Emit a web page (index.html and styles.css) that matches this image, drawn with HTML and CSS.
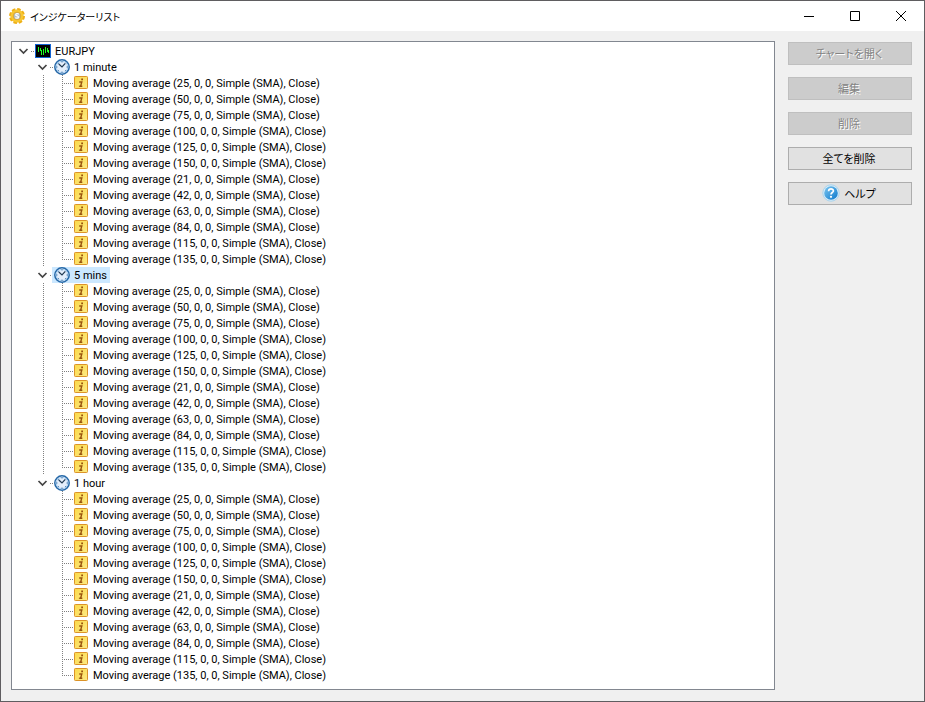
FILE: index.html
```html
<!DOCTYPE html>
<html lang="ja">
<head>
    <meta charset="UTF-8">
    <meta name="viewport" content="width=device-width, initial-scale=1.0">
    <title>インジケーターリスト</title>
    <link rel="stylesheet" href="styles.css">
    <script src="tree.js" defer></script>
</head>
<body>
    <!-- Shared icons -->
    <svg class="sprite" aria-hidden="true">
        <defs>
            <linearGradient id="gold" x1="0" y1="0" x2="1" y2="1">
                <stop offset="0" stop-color="#fbd94a"/>
                <stop offset="1" stop-color="#fdea84"/>
            </linearGradient>
            <linearGradient id="blue" x1="0" y1="0" x2="1" y2="1">
                <stop offset="0" stop-color="#7cc6f0"/>
                <stop offset="1" stop-color="#0a78cc"/>
            </linearGradient>
        </defs>
        <symbol id="chevron" viewBox="0 0 15 16">
            <path d="M3.5 6 L7.5 10 L11.5 6" fill="none" stroke="#444" stroke-width="1.7"/>
        </symbol>
        <symbol id="chart" viewBox="0 0 16 16">
            <rect x="0.5" y="1.5" width="15" height="13" fill="#000" stroke="#1464d2"/>
            <path d="M3.5 4v5M5.5 5v3M6.5 7v5M8.5 6v6M10.5 4v6M12.5 5v4M13.5 7v3" stroke="#1cff1c"/>
        </symbol>
        <symbol id="clock" viewBox="0 0 16 16">
            <circle cx="8" cy="8" r="7.2" fill="#e4eefb" stroke="#2568a8" stroke-width="1.5"/>
            <circle cx="8" cy="8" r="5.7" fill="none" stroke="#a9cdee"/>
            <path d="M8 2v1.5M8 12.5v1.5M2 8h1.5M12.5 8h1.5M4 4l.8.8M12 12l-.8-.8M4 12l.8-.8" stroke="#487fae"/>
            <path d="M4.8 5 L8 8 L11.3 4.3" fill="none" stroke="#223a52" stroke-width="1.2"/>
        </symbol>
        <symbol id="info" viewBox="0 0 16 16">
            <rect x="1.5" y="1.5" width="13" height="12" rx="0.8" fill="url(#gold)" stroke="#dc9328"/>
            <path d="M8.2 4.4h1.8" stroke="#98530e" stroke-width="1.7"/>
            <path d="M6.2 7h2.6L7.6 11.2h1.7" fill="none" stroke="#98530e" stroke-width="1.4"/>
            <path d="M5.9 11.2h2" stroke="#98530e" stroke-width="1.2"/>
        </symbol>
    </svg>

    <div class="window">
        <header class="title-bar">
            <svg class="app-icon" viewBox="0 0 16 16" aria-hidden="true">
                <circle cx="8" cy="8" r="6.6" fill="#f6bd20" stroke="#eeb018" stroke-width="2.8" stroke-dasharray="3.4 1.78"/>
                <circle cx="8" cy="8" r="6.2" fill="#f8c833"/>
                <circle cx="8" cy="8" r="3.8" fill="#b5bfc2" stroke="#e0a21c" stroke-width="0.8"/>
                <path d="M9.8 6.2C8.6 5.2 6.6 5.6 6.7 6.9 6.8 8.2 9.5 7.7 9.5 9.1 9.4 10.4 7.3 10.5 6.2 9.6" fill="none" stroke="#fff" stroke-width="1.2"/>
            </svg>
            <h1 class="title">インジケーターリスト</h1>
            <div class="window-controls">
                <button type="button" aria-label="最小化"><svg viewBox="0 0 12 12"><path d="M1 6.5h10"/></svg></button>
                <button type="button" aria-label="最大化"><svg viewBox="0 0 12 12"><path d="M1.5 1.5h9v9h-9z"/></svg></button>
                <button type="button" aria-label="閉じる"><svg viewBox="0 0 12 12"><path d="M1 1l10 10M11 1L1 11"/></svg></button>
            </div>
        </header>

        <main class="content">
            <div class="tree-panel">
                <ul class="tree">
                    <li>
                        <div class="row">
                            <button class="toggle" type="button" aria-label="EURJPY"><svg><use href="#chevron"/></svg></button>
                            <span class="label"><svg class="icon"><use href="#chart"/></svg>EURJPY</span>
                        </div>
                        <ul class="periods" id="periods"></ul>
                    </li>
                </ul>
            </div>

            <div class="actions">
                <button type="button" disabled>チャートを開く</button>
                <button type="button" disabled>編集</button>
                <button type="button" disabled>削除</button>
                <button type="button">全てを削除</button>
                <button type="button">
                    <svg class="help-icon" viewBox="0 0 18 18" aria-hidden="true">
                        <circle cx="9" cy="9" r="8.2" fill="#d8ecf8" stroke="#a9d3ed"/>
                        <circle cx="9" cy="9" r="6.8" fill="url(#blue)"/>
                        <path d="M6.6 7.2C6.7 4.2 11.5 4.3 11.4 7 11.3 8.5 9 8.6 9 10.4" fill="none" stroke="#fff" stroke-width="1.7"/>
                        <circle cx="9" cy="12.8" r="1.1" fill="#fff"/>
                    </svg>
                    ヘルプ
                </button>
            </div>
        </main>
    </div>
</body>
</html>
```

FILE: styles.css
```css
* {
    box-sizing: border-box;
}
body {
    margin: 0;
    font-family: Roboto, "Noto Sans CJK JP", sans-serif;
    font-size: 11px;
    color: #000;
}
.sprite {
    position: absolute;
    width: 0;
    height: 0;
}
.window {
    display: flex;
    flex-direction: column;
    min-height: 100vh;
    border: 1px solid #5f5d60;
    background: #f0f0f0;
}

/* Title bar */
.title-bar {
    display: flex;
    align-items: center;
    height: 30px;
    padding-left: 8px;
    background: #fff;
}
.app-icon {
    width: 16px;
    height: 16px;
    margin-right: 5px;
}
.title {
    flex: 1;
    margin: 0;
    font-family: "Noto Sans CJK JP", sans-serif;
    font-size: 10px;
    font-weight: normal;
    font-feature-settings: "palt";
}
.window-controls {
    display: flex;
}
.window-controls button {
    display: flex;
    align-items: center;
    justify-content: center;
    width: 46px;
    height: 30px;
    padding: 0;
    border: none;
    background: none;
}
.window-controls button:hover {
    background: #e5e5e5;
}
.window-controls svg {
    width: 12px;
    height: 12px;
    fill: none;
    stroke: #000;
}

.content {
    display: flex;
    flex: 1;
    gap: 13px;
    padding: 10px 12px 11px 10px;
}

/* Indicator tree */
.tree-panel {
    flex: 1;
    padding: 1px 4px;
    border: 1px solid #828790;
    background: #fff;
}
.tree, .periods, .indicators {
    margin: 0;
    padding: 0;
    list-style: none;
}
.periods, .indicators {
    padding-left: 19px;
}
.row {
    display: flex;
    height: 16px;
    background: repeating-linear-gradient(to right, #808080 0 1px, transparent 1px 2px) 15px 8px / 4px 1px no-repeat;
}
.toggle {
    width: 15px;
    height: 16px;
    margin-right: 2px;
    padding: 0;
    border: none;
    background: none;
}
.toggle svg {
    display: block;
    width: 15px;
    height: 16px;
}
.toggle.closed svg {
    transform: rotate(-90deg);
}
.label {
    display: flex;
    gap: 4px;
    height: 16px;
    padding: 0 3px 0 2px;
    line-height: 18px;
    white-space: nowrap;
}
.selected .label {
    background: #cce8ff;
}
.icon {
    flex: none;
    width: 16px;
    height: 16px;
}
.indicators {
    background: repeating-linear-gradient(#808080 0 1px, transparent 1px 2px) 8px 0 / 1px 100% no-repeat;
}
.periods > li:last-child .indicators {
    background: none;
}
.indicators li {
    padding-left: 17px;
    background:
        repeating-linear-gradient(#808080 0 1px, transparent 1px 2px) 8px 0 / 1px 16px no-repeat,
        repeating-linear-gradient(to right, #808080 0 1px, transparent 1px 2px) 8px 8px / 11px 1px no-repeat;
}
.indicators li:last-child {
    background-size: 1px 8px, 11px 1px;
}

/* Buttons on the right */
.actions {
    display: flex;
    flex-direction: column;
    gap: 12px;
    width: 124px;
    padding-top: 1px;
}
.actions button {
    display: flex;
    align-items: center;
    justify-content: center;
    gap: 4px;
    height: 23px;
    padding: 0 2px 2px 0;
    border: 1px solid #adadad;
    background: #e1e1e1;
    color: #000;
    font-family: "Noto Sans CJK JP", sans-serif;
    font-size: 11px;
    font-feature-settings: "palt";
}
.actions button:hover {
    border-color: #0078d7;
    background: #e5f1fb;
}
.actions button:disabled {
    border-color: #bfbfbf;
    background: #ccc;
    color: #838383;
    text-shadow: 1px 1px #fff;
}
.help-icon {
    width: 18px;
    height: 18px;
}
```

FILE: tree.js
```js
const periods = [
    { name: "1 minute" },
    { name: "5 mins", selected: true },
    { name: "1 hour" }
];
const lengths = [25, 50, 75, 100, 125, 150, 21, 42, 63, 84, 115, 135];

// Build one branch for each period
document.getElementById("periods").innerHTML = periods.map(period => `
    <li>
        <div class="row${period.selected ? " selected" : ""}">
            <button class="toggle" type="button" aria-label="${period.name}"><svg><use href="#chevron"/></svg></button>
            <span class="label"><svg class="icon"><use href="#clock"/></svg>${period.name}</span>
        </div>
        <ul class="indicators">
            ${lengths.map(n => `<li><span class="label"><svg class="icon"><use href="#info"/></svg>Moving average (${n}, 0, 0, Simple (SMA), Close)</span></li>`).join("")}
        </ul>
    </li>`).join("");

document.querySelectorAll(".toggle").forEach(button => {
    button.addEventListener("click", () => {
        const list = button.closest("li").querySelector("ul");
        list.hidden = !list.hidden;
        button.classList.toggle("closed", list.hidden);
    });
});
```
